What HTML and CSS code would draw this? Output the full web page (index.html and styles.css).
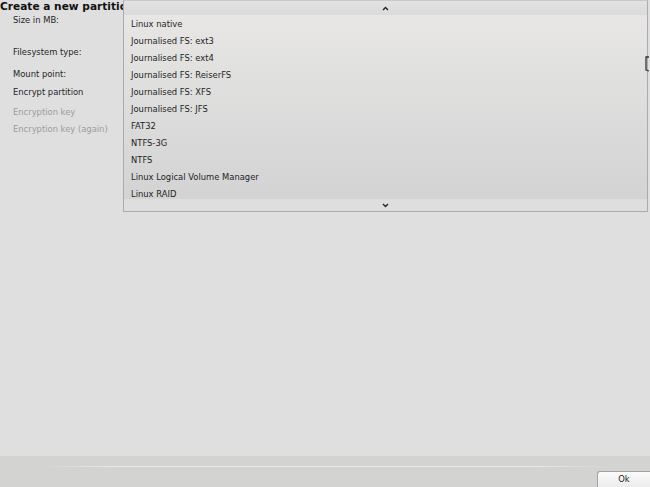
FILE: index.html
```html
<!DOCTYPE html>
<html>
<head>
<meta charset="utf-8">
<link rel="stylesheet" href="styles.css">
</head>
<body>
<div class="window">
  <div class="content">
    <div class="title">Create a new partition on sda</div>
    <div class="form">
      <div class="row r-size">Size in MB:</div>
      <div class="row r-fs">Filesystem type:</div>
      <div class="row r-mount">Mount point:</div>
      <div class="row r-enc">Encrypt partition</div>
      <div class="row r-key disabled">Encryption key</div>
      <div class="row r-key2 disabled">Encryption key (again)</div>
    </div>
  </div>
  <div class="footer">
    <div class="sep"></div>
    <div class="buttons"><button class="btn">Ok</button></div>
  </div>

  <div class="popup">
    <div class="scroll up"><svg width="7" height="5" viewBox="0 0 7 5"><path d="M1 4 L3.5 1.5 L6 4" fill="none" stroke="#222" stroke-width="1.4"/></svg></div>
    <div class="list">
      <div class="item">Linux native</div>
      <div class="item">Journalised FS: ext3</div>
      <div class="item">Journalised FS: ext4</div>
      <div class="item">Journalised FS: ReiserFS</div>
      <div class="item">Journalised FS: XFS</div>
      <div class="item">Journalised FS: JFS</div>
      <div class="item">FAT32</div>
      <div class="item">NTFS-3G</div>
      <div class="item">NTFS</div>
      <div class="item">Linux Logical Volume Manager</div>
      <div class="item">Linux RAID</div>
    </div>
    <div class="scroll down"><svg width="7" height="5" viewBox="0 0 7 5"><path d="M1 1 L3.5 3.5 L6 1" fill="none" stroke="#222" stroke-width="1.4"/></svg></div>
  </div>

  <svg class="cursor" width="6" height="16" viewBox="0 0 6 16"><path d="M5 1 L2 1 L2 14 L5 15" fill="none" stroke="#333" stroke-width="1.3"/></svg>
</div>
</body>
</html>
```

FILE: styles.css
```css
html, body {
  margin: 0;
  padding: 0;
}
body {
  width: 650px;
  height: 487px;
  overflow: hidden;
  background: #dfdfdf;
  font-family: "DejaVu Sans", sans-serif;
  font-size: 8.4px;
  color: #1e1e1e;
}
.window {
  position: relative;
  width: 650px;
  height: 487px;
  display: flex;
  flex-direction: column;
}
.content {
  flex: 1;
  background: #dfdfdf;
}
.title {
  font-weight: bold;
  font-size: 10.6px;
  line-height: 12px;
  height: 12px;
  white-space: nowrap;
  color: #111;
}
.form {
  padding-left: 13px;
  padding-top: 2px;
}
.row {
  line-height: 12px;
  white-space: nowrap;
}
.r-size { height: 32px; }
.r-fs { height: 22px; }
.r-mount { height: 18px; }
.r-enc { height: 20px; }
.r-key { height: 17px; }
.r-key2 { height: 17px; }
.disabled { color: #9c9c9c; }

.footer {
  height: 31px;
  background: #d3d3d1;
  display: flex;
  flex-direction: column;
}
.sep {
  height: 1px;
  margin: 10px 40px 0 40px;
  background: linear-gradient(to right, rgba(240,240,240,0), #ececec 15%, #ececec 85%, rgba(240,240,240,0));
}
.buttons {
  flex: 1;
  display: flex;
  justify-content: flex-end;
  align-items: flex-end;
}
.btn {
  width: 53px;
  height: 16px;
  margin: 0;
  padding: 0;
  border: 1px solid #a2a2a2;
  border-bottom: none;
  border-right: none;
  border-radius: 3px 0 0 0;
  background: linear-gradient(#fbfbfb, #ececec);
  font-family: "DejaVu Sans", sans-serif;
  font-size: 8.4px;
  color: #1e1e1e;
  line-height: 15px;
}

.popup {
  position: absolute;
  left: 123px;
  top: 0;
  width: 523px;
  height: 210px;
  border: 1px solid #ababab;
  border-top: 1px solid #c8c8c8;
  background: linear-gradient(#e9e8e7, #d2d2d2);
  display: flex;
  flex-direction: column;
}
.scroll {
  display: flex;
  justify-content: center;
  align-items: center;
  background: #dcdcdc;
}
.up { height: 14px; background: linear-gradient(#e2e2e2, #dadada); }
.down { height: 12px; background: #dedede; }
.list {
  flex: 1;
  overflow: hidden;
  padding-top: 1px;
}
.item {
  height: 17px;
  line-height: 17px;
  padding-left: 7px;
  white-space: nowrap;
}
.cursor {
  position: absolute;
  left: 644px;
  top: 56px;
}
```
